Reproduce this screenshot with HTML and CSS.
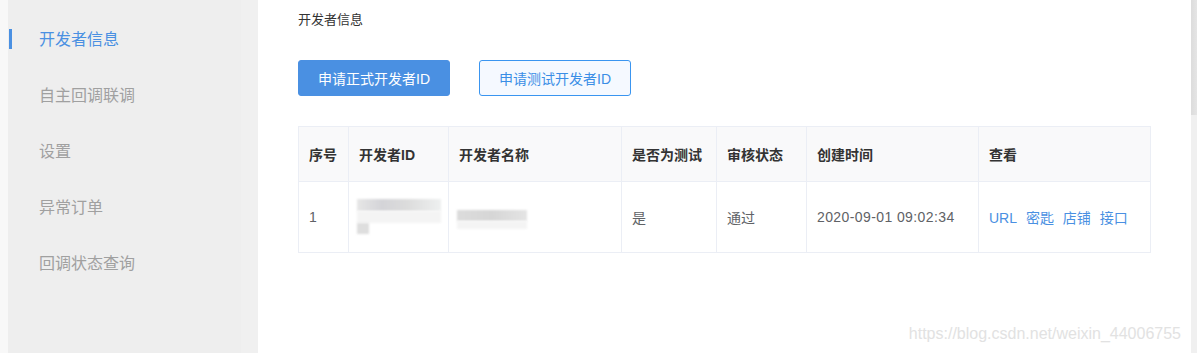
FILE: index.html
```html
<!DOCTYPE html>
<html lang="zh-CN">
<head>
    <meta charset="UTF-8">
    <meta name="viewport" content="width=device-width, initial-scale=1.0">
    <title>开发者信息</title>
    <link rel="stylesheet" href="styles.css">
</head>
<body>
    <div class="page">
        <div class="sidebar">
            <ul class="menu">
                <li class="menu-item active">开发者信息</li>
                <li class="menu-item">自主回调联调</li>
                <li class="menu-item">设置</li>
                <li class="menu-item">异常订单</li>
                <li class="menu-item">回调状态查询</li>
            </ul>
        </div>
        <div class="gutter"></div>
        <div class="main">
            <div class="page-title">开发者信息</div>
            <div class="actions">
                <button class="btn btn-primary">申请正式开发者ID</button>
                <button class="btn btn-plain">申请测试开发者ID</button>
            </div>
            <table class="dev-table">
                <thead>
                    <tr>
                        <th class="col-no">序号</th>
                        <th class="col-id">开发者ID</th>
                        <th class="col-name">开发者名称</th>
                        <th class="col-test">是否为测试</th>
                        <th class="col-status">审核状态</th>
                        <th class="col-time">创建时间</th>
                        <th>查看</th>
                    </tr>
                </thead>
                <tbody>
                    <tr>
                        <td>1</td>
                        <td>
                            <div class="masked">
                                <span class="mask mask-a"></span>
                                <span class="mask mask-b"></span>
                                <span class="mask mask-c"></span>
                            </div>
                        </td>
                        <td>
                            <div class="masked">
                                <span class="mask mask-d"></span>
                                <span class="mask mask-e"></span>
                            </div>
                        </td>
                        <td>是</td>
                        <td>通过</td>
                        <td class="time">2020-09-01 09:02:34</td>
                        <td class="links">
                            <a href="#">URL</a>
                            <a href="#">密匙</a>
                            <a href="#">店铺</a>
                            <a href="#">接口</a>
                        </td>
                    </tr>
                </tbody>
            </table>
            <div class="watermark">https://blog.csdn.net/weixin_44006755</div>
        </div>
        <div class="scrollbar"><div class="thumb"></div></div>
    </div>
</body>
</html>
```

FILE: styles.css
```css
html, body {
    margin: 0;
    height: 100%;
}
body {
    font-family: "Liberation Sans", Arial, "Noto Sans CJK SC", sans-serif;
    background: #f8f8f8;
    overflow: hidden;
}
.page {
    display: flex;
    height: 353px;
    padding-left: 8px;
}
.sidebar {
    width: 233px;
    background: #eeeeee;
    flex-shrink: 0;
}
.gutter {
    width: 17px;
    background: #f0f0f0;
    flex-shrink: 0;
}
.menu {
    list-style: none;
    margin: 0;
    padding: 28px 0 0;
}
.menu-item {
    position: relative;
    height: 24px;
    line-height: 24px;
    margin-bottom: 32px;
    padding-left: 31px;
    font-size: 16px;
    color: #a0a0a0;
}
.menu-item.active {
    color: #4a90e2;
}
.menu-item.active::before {
    content: "";
    position: absolute;
    left: 1px;
    top: 1px;
    width: 3px;
    height: 20px;
    background: #4a90e2;
}
.main {
    position: relative;
    flex: 1;
    background: #fff;
    padding: 11px 40px 0;
}
.page-title {
    font-size: 13px;
    color: #333;
    line-height: 18px;
}
.actions {
    display: flex;
    gap: 29px;
    margin-top: 31px;
}
.btn {
    width: 152px;
    height: 36px;
    border-radius: 3px;
    font-size: 14px;
    font-family: inherit;
    cursor: pointer;
}
.btn-primary {
    background: #4a90e2;
    border: 1px solid #4a90e2;
    color: #fff;
}
.btn-plain {
    background: #f5f9ff;
    border: 1px solid #3a95f0;
    color: #3a8ee6;
}
.dev-table {
    margin-top: 30px;
    width: 853px;
    border-collapse: collapse;
    font-size: 14px;
}
.dev-table th,
.dev-table td {
    border: 1px solid #ebeef5;
    padding: 0 10px;
    text-align: left;
}
.dev-table th {
    height: 54px;
    background: #f9f9fa;
    color: #333;
    font-weight: bold;
}
.dev-table td {
    height: 70px;
    color: #606266;
}
.dev-table td.time {
    letter-spacing: 0.4px;
}
.col-no { width: 29px; }
.col-id { width: 79px; }
.col-name { width: 152px; }
.col-test { width: 74px; }
.col-status { width: 69px; }
.col-time { width: 151px; }
.links a {
    color: #4a90e2;
    text-decoration: none;
    margin-right: 5px;
}
.masked {
    position: relative;
    height: 44px;
}
.mask {
    position: absolute;
    background: #d9d9d9;
    filter: blur(1px);
}
.mask-a {
    left: -2px;
    top: 4px;
    width: 84px;
    height: 12px;
    background: linear-gradient(90deg, #e6e6e6, #d4d4d8 30%, #dcdcdc 60%, #eef0f0);
}
.mask-b {
    left: -2px;
    top: 16px;
    width: 84px;
    height: 12px;
    background: #f4f4f4;
}
.mask-c {
    left: -2px;
    top: 28px;
    width: 12px;
    height: 11px;
    background: #dedede;
}
.mask-d {
    left: -2px;
    top: 15px;
    width: 70px;
    height: 11px;
    background: linear-gradient(90deg, #dcdcdc, #d6d6d6 50%, #e4e4e4);
}
.mask-e {
    left: -2px;
    top: 26px;
    width: 70px;
    height: 8px;
    background: #f4f4f4;
}
.watermark {
    position: absolute;
    right: 10px;
    bottom: 10px;
    font-size: 16px;
    color: #e2e2e2;
}
.scrollbar {
    width: 7px;
    background: #f0f0f0;
    flex-shrink: 0;
}
.thumb {
    height: 115px;
    background: linear-gradient(90deg, #dcdcdc, #e6e6e6);
}
```
